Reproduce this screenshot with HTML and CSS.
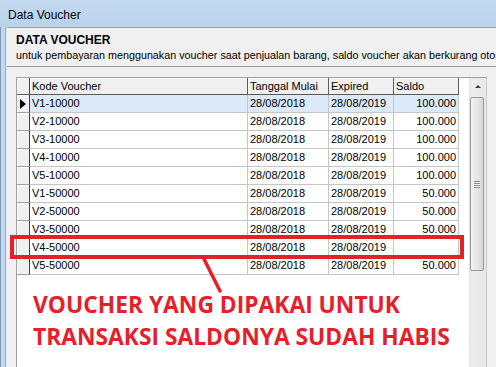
FILE: index.html
```html
<!DOCTYPE html>
<html lang="id">
<head>
  <meta charset="UTF-8" />
  <title>Data Voucher</title>
  <link rel="stylesheet" href="styles.css">
</head>
<body>
  <div class="window">
    <div class="titlebar">Data Voucher</div>
    <div class="frame">
      <div class="frame-edge"></div>
      <div class="client">
        <div class="info">
          <div class="info-title">DATA VOUCHER</div>
          <div class="info-desc">untuk pembayaran menggunakan voucher saat penjualan barang, saldo voucher akan berkurang otomatis</div>
        </div>

        <div class="grid-wrap">
          <div class="grid-body">
            <table class="dbgrid">
              <colgroup>
                <col class="c-ind">
                <col class="c-kode">
                <col class="c-tgl">
                <col class="c-exp">
                <col class="c-saldo">
              </colgroup>
              <tr class="head">
                <th class="ind"></th>
                <th>Kode Voucher</th>
                <th>Tanggal Mulai</th>
                <th>Expired</th>
                <th>Saldo</th>
              </tr>
              <tr class="sel">
                <td class="ind"><span class="arrow"></span></td>
                <td>V1-10000</td><td>28/08/2018</td><td>28/08/2019</td><td class="num">100.000</td>
              </tr>
              <tr>
                <td class="ind"></td>
                <td>V2-10000</td><td>28/08/2018</td><td>28/08/2019</td><td class="num">100.000</td>
              </tr>
              <tr>
                <td class="ind"></td>
                <td>V3-10000</td><td>28/08/2018</td><td>28/08/2019</td><td class="num">100.000</td>
              </tr>
              <tr>
                <td class="ind"></td>
                <td>V4-10000</td><td>28/08/2018</td><td>28/08/2019</td><td class="num">100.000</td>
              </tr>
              <tr>
                <td class="ind"></td>
                <td>V5-10000</td><td>28/08/2018</td><td>28/08/2019</td><td class="num">100.000</td>
              </tr>
              <tr>
                <td class="ind"></td>
                <td>V1-50000</td><td>28/08/2018</td><td>28/08/2019</td><td class="num">50.000</td>
              </tr>
              <tr>
                <td class="ind"></td>
                <td>V2-50000</td><td>28/08/2018</td><td>28/08/2019</td><td class="num">50.000</td>
              </tr>
              <tr>
                <td class="ind"></td>
                <td>V3-50000</td><td>28/08/2018</td><td>28/08/2019</td><td class="num">50.000</td>
              </tr>
              <tr>
                <td class="ind"></td>
                <td>V4-50000</td><td>28/08/2018</td><td>28/08/2019</td><td class="num"></td>
              </tr>
              <tr>
                <td class="ind"></td>
                <td>V5-50000</td><td>28/08/2018</td><td>28/08/2019</td><td class="num">50.000</td>
              </tr>
            </table>
            <div class="note">VOUCHER YANG DIPAKAI UNTUK<br>TRANSAKSI SALDONYA SUDAH HABIS</div>
          </div>
          <div class="scrollbar">
            <div class="sb-btn"><span class="sb-up"></span></div>
            <div class="sb-thumb">
              <div class="grip"></div>
            </div>
          </div>
        </div>
      </div>
    </div>

    <!-- tanda merah -->
    <div class="mark"></div>
    <svg class="pointer" width="30" height="40" viewBox="0 0 30 40">
      <line x1="4" y1="1" x2="20" y2="33" stroke="#e3212b" stroke-width="3.5" stroke-linecap="round" />
    </svg>
  </div>
</body>
</html>
```

FILE: styles.css
```css
body {
  margin: 0;
  width: 496px;
  height: 367px;
  overflow: hidden;
  font-family: 'Liberation Sans', Arial, sans-serif;
  background: #f0f0f0;
  color: #000;
}
.window {
  position: relative;
  height: 367px;
  display: flex;
  flex-direction: column;
}
.titlebar {
  height: 27px;
  box-sizing: border-box;
  padding: 4px 0 0 8px;
  line-height: 23px;
  font-size: 12px;
  background: linear-gradient(#c4d9ef, #b9d1ea);
  flex-shrink: 0;
}
.frame {
  flex: 1;
  display: flex;
  min-height: 0;
}
.frame-edge {
  width: 7px;
  flex-shrink: 0;
  background: linear-gradient(to right, #7f9ab8 0 1px, #c3d8ee 1px 5px, #98abc2 5px 6px, #e4ecf5 6px 7px);
}
.client {
  flex: 1;
  min-width: 0;
  background: #f0f0f0;
  display: flex;
  flex-direction: column;
}
.info {
  border-top: 1px solid #a0a0a0;
  border-bottom: 1px solid #a0a0a0;
  padding: 5px 0 4px 9px;
  white-space: nowrap;
  overflow: hidden;
}
.info-title {
  font-size: 12px;
  font-weight: bold;
  line-height: 14px;
}
.info-desc {
  font-size: 10.75px;
  line-height: 14px;
  margin-top: 1px;
}
.grid-wrap {
  margin: 10px 9px 0 9px;
  flex: 1;
  min-height: 0;
  display: flex;
  border: 1px solid #a0a0a0;
  border-right-color: #c8c8c8;
  border-bottom: 0;
}
.grid-body {
  flex: 1;
  background: #fff;
}
.dbgrid {
  border-collapse: separate;
  border-spacing: 0;
  table-layout: fixed;
  width: 442px;
  font-size: 11px;
}
.c-ind { width: 13px; }
.c-kode { width: 218px; }
.c-tgl { width: 81px; }
.c-exp { width: 65px; }
.c-saldo { width: 65px; }
.dbgrid th,
.dbgrid td {
  padding: 0 2px;
  white-space: nowrap;
  overflow: hidden;
  text-align: left;
  font-weight: normal;
}
.dbgrid th {
  height: 16px;
  line-height: 16px;
  background: #f0f0f0;
  border-right: 1px solid #5a5a5a;
  border-bottom: 1px solid #5a5a5a;
  box-shadow: inset 1px 1px #fff;
}
.dbgrid td {
  height: 17px;
  line-height: 17px;
  border-right: 1px solid #c6c6c6;
  border-bottom: 1px solid #c6c6c6;
}
.dbgrid td.num {
  text-align: right;
}
.dbgrid .ind {
  padding: 0;
  background: #f0f0f0;
  border-right: 1px solid #404040;
  border-bottom: 1px solid #a0a0a0;
  box-shadow: inset 1px 1px #fff;
}
.dbgrid th.ind {
  border-bottom-color: #5a5a5a;
}
.dbgrid tr.sel td {
  background: #dce9f8;
}
.dbgrid tr.sel td.ind {
  background: #f0f0f0;
}
.arrow {
  display: block;
  width: 0;
  height: 0;
  margin-left: 3px;
  border-left: 6px solid #000;
  border-top: 5px solid transparent;
  border-bottom: 5px solid transparent;
}
.note {
  margin: 14px 0 0 16px;
  font-family: 'Open Sans', sans-serif;
  font-weight: 700;
  font-size: 22.8px;
  line-height: 32px;
  color: #e3212b;
  white-space: nowrap;
}
.scrollbar {
  width: 17px;
  flex-shrink: 0;
  background: linear-gradient(to right, #e3e3e3, #ececec 3px, #e8e8e8);
  display: flex;
  flex-direction: column;
}
.sb-btn {
  height: 17px;
  display: flex;
  align-items: center;
  justify-content: center;
}
.sb-up {
  width: 0;
  height: 0;
  border-bottom: 3px solid #3c3c3c;
  border-left: 3px solid transparent;
  border-right: 3px solid transparent;
}
.sb-thumb {
  margin: 2px 2px 0 1px;
  height: 172px;
  border: 1px solid #979797;
  border-radius: 2px;
  background: linear-gradient(to right, #f4f4f4, #e6e6e6 50%, #d8d8d8);
  display: flex;
  align-items: center;
  justify-content: center;
}
.grip {
  width: 6px;
  height: 7px;
  background: repeating-linear-gradient(#8a8a8a 0 1px, #f4f4f4 1px 2px);
}
.mark {
  position: absolute;
  left: 10px;
  top: 235px;
  width: 454px;
  height: 24px;
  box-sizing: border-box;
  border: 4px solid #e3212b;
}
.pointer {
  position: absolute;
  left: 200px;
  top: 258px;
}
```
